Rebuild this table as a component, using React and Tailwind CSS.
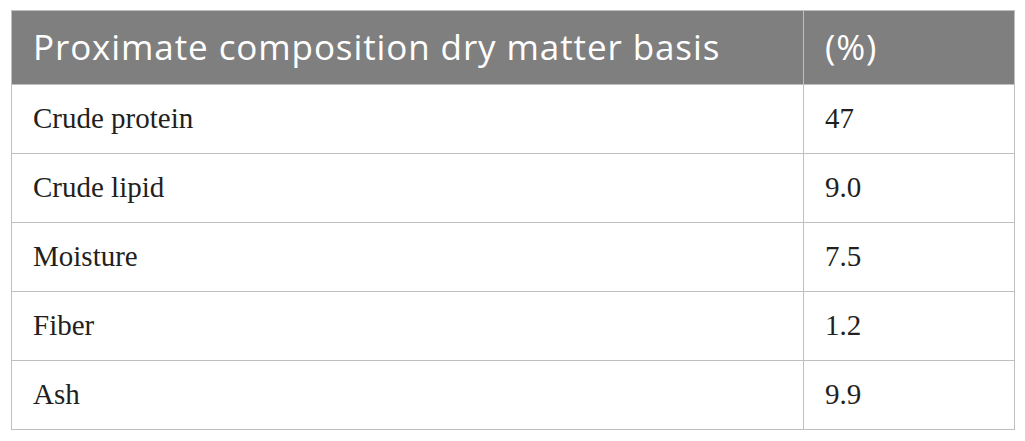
import React from "react";

const rows = [
  ["Crude protein", "47"],
  ["Crude lipid", "9.0"],
  ["Moisture", "7.5"],
  ["Fiber", "1.2"],
  ["Ash", "9.9"],
];

export default function App() {
  return (
    <div className="w-[1025px] h-[441px] bg-white pt-[10px] pl-[11px]">
      <table className="w-[1003px] border-collapse border border-[#bfbfbf] table-fixed">
        <colgroup>
          <col className="w-[792px]" />
          <col className="w-[211px]" />
        </colgroup>
        <thead>
          <tr className="bg-[#7f7f7f] h-[74px]">
            <th className="border border-[#bfbfbf] pl-[21px] text-left font-normal text-white text-[35px] font-['Open_Sans',sans-serif] tracking-[0.9px]">
              Proximate composition dry matter basis
            </th>
            <th className="border border-[#bfbfbf] pl-[21px] text-left font-normal text-white text-[35px] font-['Open_Sans',sans-serif] tracking-[0.9px]">
              (%)
            </th>
          </tr>
        </thead>
        <tbody>
          {rows.map(([name, value]) => (
            <tr key={name} className="h-[69px]">
              <td className="border border-[#bfbfbf] pl-[21px] text-[29px] text-[#231f20] font-['Liberation_Serif',serif]">
                {name}
              </td>
              <td className="border border-[#bfbfbf] pl-[21px] text-[29px] text-[#231f20] font-['Liberation_Serif',serif]">
                {value}
              </td>
            </tr>
          ))}
        </tbody>
      </table>
    </div>
  );
}
